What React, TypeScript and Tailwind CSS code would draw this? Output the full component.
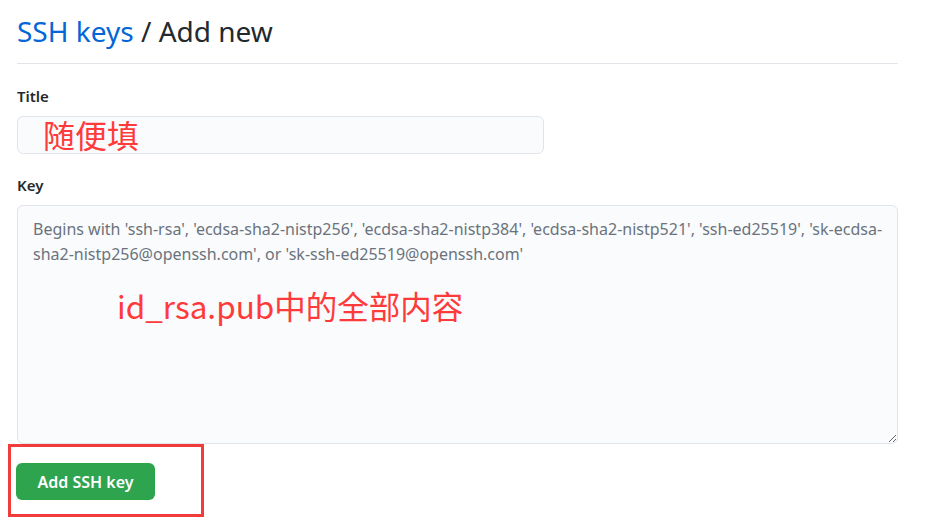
import React from "react";

const note = "absolute text-[#ff3a3a] [font-family:'Noto_Sans_CJK_SC','Noto_Sans',sans-serif] pointer-events-none";

export default function App() {
  const placeholder =
    "Begins with 'ssh-rsa', 'ecdsa-sha2-nistp256', 'ecdsa-sha2-nistp384', 'ecdsa-sha2-nistp521', 'ssh-ed25519', 'sk-ecdsa-\nsha2-nistp256@openssh.com', or 'sk-ssh-ed25519@openssh.com'";

  return (
    <div className="min-h-[525px] w-[935px] bg-white [font-family:'Segoe_UI','Noto_Sans',sans-serif] text-[#24292e]">
      <div className="w-[898px] pl-[17px]">
        {/* header */}
        <div className="flex h-[64px] items-center border-b border-[#e1e4e8] pb-[1px]">
          <h2 className="text-[28px] font-normal leading-none">
            <a className="text-[#0366d6]">SSH keys</a> / Add new
          </h2>
        </div>

        {/* title */}
        <div className="mt-[22px]">
          <label className="block text-[15px] font-semibold leading-[20px]">Title</label>
          <div className="relative mt-[10px]">
            <input
              className="h-[38px] w-[527px] rounded-[6px] border border-[#e1e4e8] bg-[#fafbfc] px-[10px] outline-none"
              readOnly
            />
            <span className={`${note} left-[26px] top-[-4px] text-[32px] leading-[44px]`}>随便填</span>
          </div>
        </div>

        {/* key */}
        <div className="mt-[21px]">
          <label className="block text-[15px] font-semibold leading-[20px]">Key</label>
          <div className="relative mt-[10px]">
            <textarea
              className="block h-[239px] w-[881px] rounded-[6px] border border-[#e1e4e8] bg-[#fafbfc] pl-[15px] pr-[2px] pt-[11px] pb-[10px] text-[16px] leading-[25px] outline-none placeholder:text-[#6a737d]"
              placeholder={placeholder}
            />
            <span className={`${note} left-[100px] top-[78px] text-[31.5px] leading-[44px]`}>
              id_rsa.pub中的全部内容
            </span>
          </div>
        </div>
      </div>

      {/* submit */}
      <div className="relative h-[82px] pl-[16px] pt-[19px]">
        <button className="h-[37px] w-[139px] rounded-[6px] border border-[#28a745]/60 bg-[#2ea44f] text-[16px] font-semibold text-white">
          Add SSH key
        </button>
        <div className="pointer-events-none absolute left-[8px] top-0 h-[73px] w-[196px] border-[3px] border-[#f23b3b]" />
      </div>
    </div>
  );
}
